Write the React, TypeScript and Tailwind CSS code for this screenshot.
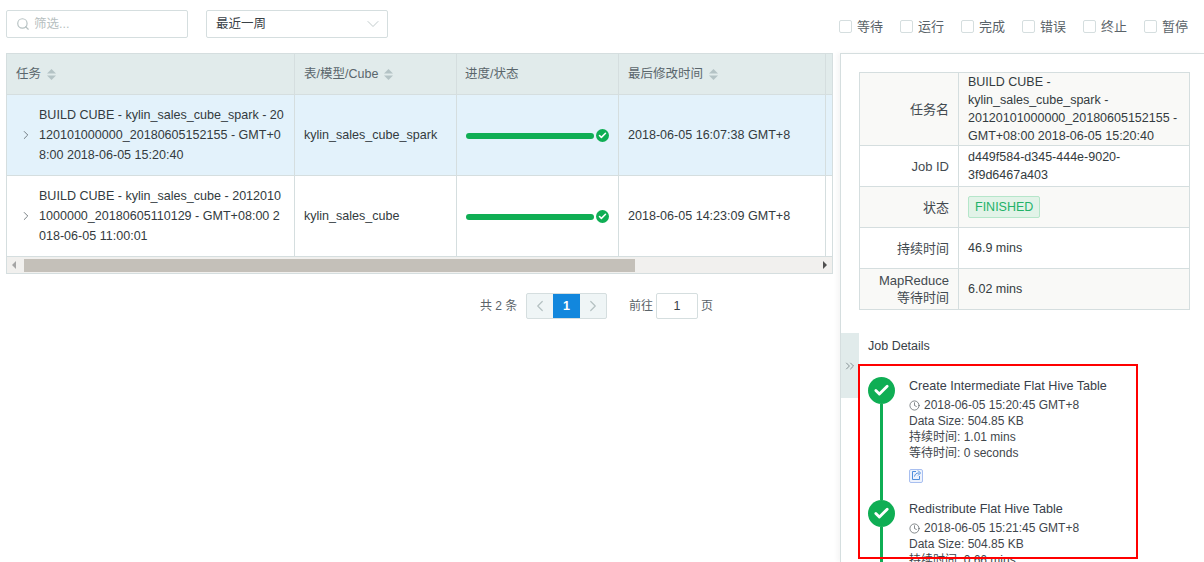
import { Check, ChevronDown, ChevronLeft, ChevronRight, ChevronsRight, Clock, Search } from "lucide-react";

const font = "font-['Liberation_Sans','Noto_Sans_CJK_SC',sans-serif]";

const statuses = ["等待", "运行", "完成", "错误", "终止", "暂停"];

const jobs = [
  {
    lines: ["BUILD CUBE - kylin_sales_cube_spark - 20", "120101000000_20180605152155 - GMT+0", "8:00 2018-06-05 15:20:40"],
    cube: "kylin_sales_cube_spark",
    time: "2018-06-05 16:07:38 GMT+8",
    active: true,
  },
  {
    lines: ["BUILD CUBE - kylin_sales_cube - 2012010", "1000000_20180605110129 - GMT+08:00 2", "018-06-05 11:00:01"],
    cube: "kylin_sales_cube",
    time: "2018-06-05 14:23:09 GMT+8",
    active: false,
  },
];

function SortIcon() {
  return (
    <svg width="9" height="11" viewBox="0 0 9 11" className="ml-[6px] fill-[#b4c3c5]">
      <path d="M4.5 0 9 4.5H0Z" />
      <path d="M4.5 11 0 6.5h9Z" />
    </svg>
  );
}

function DoneBar() {
  return (
    <div className="flex items-center">
      <div className="mt-[1px] h-[6px] w-[128px] rounded-full bg-[#0fae54]" />
      <div className="ml-[2px] flex h-[13px] w-[13px] items-center justify-center rounded-full bg-[#0fae54]">
        <Check size={9} strokeWidth={4} className="text-white" />
      </div>
    </div>
  );
}

function InfoRow({ label, shaded, h, children }: { label: React.ReactNode; shaded?: boolean; h: string; children: React.ReactNode }) {
  return (
    <div className={`flex border-b border-[#d5dedf] ${h} ${shaded ? "bg-[#f9f9f7]" : "bg-white"}`}>
      <div className="flex w-[99px] shrink-0 items-center justify-end border-r border-[#d5dedf] pr-[9px] text-right text-[13px] leading-[17px] text-[#434a50]">
        {label}
      </div>
      <div className="flex flex-1 items-center pl-[9px] text-[12.5px] leading-[18px] text-[#333b40]">{children}</div>
    </div>
  );
}

function Step({ title, time, wait, duration, link }: { title: string; time: string; wait: string; duration: string; link?: boolean }) {
  return (
    <div className="flex">
      <div className="flex w-[27px] shrink-0 flex-col items-center">
        <div className="flex h-[27px] w-[27px] shrink-0 items-center justify-center rounded-full bg-[#0fae54]">
          <Check size={17} strokeWidth={4} className="text-white" />
        </div>
        <div className="w-[3px] flex-1 bg-[#0fae54]" />
      </div>
      <div className={`ml-[14px] pt-[1px] text-[12px] leading-[16px] text-[#3f464c] ${link ? "pb-[17px]" : "pb-[8px]"}`}>
        <div className="text-[12.6px] leading-[16px] text-[#38404a]">{title}</div>
        <div className="mt-[3px] flex items-center">
          <Clock size={11} strokeWidth={1.5} className="mr-[4px] text-[#4f565b]" />
          {time}
        </div>
        <div>Data Size: 504.85 KB</div>
        <div>持续时间: {duration}</div>
        <div>等待时间: {wait}</div>
        {link && (
          <svg width="14" height="15" viewBox="0 0 14 15" fill="none" className="mt-[7px]">
            <rect x="0.5" y="1.5" width="13" height="13" rx="1.5" fill="#eef3fd" stroke="#a8bff0" />
            <path d="M7 3.5H3.5v8h7V8" stroke="#4f8fdc" strokeWidth="1" />
            <path d="M5.5 8.5C6 6 7.5 5 10 5" stroke="#4f8fdc" strokeWidth="1" />
            <path d="M9 2.5 11.5 5 9 7.5" stroke="#4f8fdc" strokeWidth="1" />
          </svg>
        )}
      </div>
    </div>
  );
}

export default function App() {
  return (
    <div className={`${font} flex h-[562px] w-[1204px] flex-col overflow-hidden bg-white`}>
      <div className="flex h-[53px] shrink-0 items-start pl-[6px] pt-[10px]">
        <div className="flex h-[28px] w-[182px] items-center rounded-[2px] border border-[#d5dedf] pl-[9px] text-[12.5px] text-[#b7bfc1]">
          <Search size={14} className="mr-[4px] text-[#b7c2c3]" />
          筛选...
        </div>
        <div className="ml-[18px] flex h-[28px] w-[182px] items-center justify-between rounded-[2px] border border-[#d5dedf] pl-[9px] pr-[4px] text-[12.5px] text-[#3a4147]">
          最近一周
          <ChevronDown size={20} strokeWidth={1} className="text-[#b4c0c2]" />
        </div>
        <div className="ml-auto mr-[8px] mt-[9px] flex gap-[9px]">
          {statuses.map((s) => (
            <label key={s} className="flex w-[52px] items-center text-[13px] leading-[15px] text-[#5a6369]">
              <span className="mr-[5px] h-[13px] w-[13px] rounded-[2px] border border-[#d5dedf]" />
              {s}
            </label>
          ))}
        </div>
      </div>

      <div className="flex min-h-0 flex-1">
        <div className="w-[840px] shrink-0 pl-[6px]">
          <div className="h-[221px] w-[827px] border border-[#d5dedf] text-[12px]">
            <div className="flex h-[41px] border-b border-[#d5dedf] bg-[#e1ebeb] text-[12.5px] text-[#5a666c]">
              <div className="flex w-[288px] items-center border-r border-[#d5dedf] pl-[9px]">任务<SortIcon /></div>
              <div className="flex w-[162px] items-center border-r border-[#d5dedf] pl-[9px]">表/模型/Cube<SortIcon /></div>
              <div className="flex w-[162px] items-center border-r border-[#d5dedf] pl-[8px]">进度/状态</div>
              <div className="flex w-[207px] items-center border-r border-[#d5dedf] pl-[9px]">最后修改时间<SortIcon /></div>
            </div>
            {jobs.map((job) => (
              <div key={job.cube} className={`flex h-[81px] border-b border-[#d5dedf] ${job.active ? "bg-[#e3f2fb]" : "bg-white"}`}>
                <div className="flex w-[288px] items-center border-r border-[#d5dedf]">
                  <ChevronRight size={14} strokeWidth={1.3} className="ml-[12px] mr-[6px] shrink-0 text-[#4f595e]" />
                  <div className="whitespace-nowrap text-[12.55px] leading-[20px] text-[#333b40]">
                    {job.lines.map((line) => (
                      <div key={line}>{line}</div>
                    ))}
                  </div>
                </div>
                <div className="flex w-[162px] items-center border-r border-[#d5dedf] pl-[9px] text-[12.55px] text-[#333b40]">{job.cube}</div>
                <div className="flex w-[162px] items-center border-r border-[#d5dedf] pl-[9px]"><DoneBar /></div>
                <div className="flex w-[207px] items-center border-r border-[#d5dedf] pl-[9px] text-[12.55px] text-[#333b40]">{job.time}</div>
              </div>
            ))}
            <div className="flex h-[16px] items-center bg-[#f1f0ee]">
              <div className="w-[17px] pl-[5px]">
                <div className="h-0 w-0 border-y-[4px] border-r-[4px] border-y-transparent border-r-[#a5a5a5]" />
              </div>
              <div className="h-[13px] w-[611px] bg-[#c4c0b9]" />
              <div className="ml-auto pr-[5px]">
                <div className="h-0 w-0 border-y-[4px] border-l-[4px] border-y-transparent border-l-[#505050]" />
              </div>
            </div>
          </div>

          <div className="mt-[19px] flex items-center text-[12px] text-[#5a6369]">
            <span className="ml-[474px] w-[38px] whitespace-nowrap">共 2 条</span>
            <div className="ml-[8px] flex h-[26px] w-[81px] overflow-hidden rounded-[2px] border border-[#d5dedf] bg-[#eff5f6]">
              <div className="flex w-[26px] items-center justify-center">
                <ChevronLeft size={18} strokeWidth={1.6} className="text-[#b4c0c2]" />
              </div>
              <div className="flex w-[27px] items-center justify-center bg-[#1287dd] text-[12.5px] font-bold text-white">1</div>
              <div className="flex w-[26px] items-center justify-center">
                <ChevronRight size={18} strokeWidth={1.6} className="text-[#b4c0c2]" />
              </div>
            </div>
            <span className="ml-[22px]">前往</span>
            <div className="ml-[3px] flex h-[26px] w-[42px] items-center justify-center rounded-[2px] border border-[#d5dedf] text-[12.5px] text-[#3a4147]">1</div>
            <span className="ml-[3px]">页</span>
          </div>
        </div>

        <div className="relative flex-1 border-l border-t border-[#d5dedf] pl-[18px] shadow-[-3px_0_4px_rgba(0,0,0,0.04)]">
          <div className="mt-[18px] w-[331px] border-x border-t border-[#d5dedf]">
            <InfoRow label="任务名" shaded h="h-[73px]">
              <div>
                BUILD CUBE -<br />
                kylin_sales_cube_spark -<br />
                20120101000000_20180605152155 -<br />
                GMT+08:00 2018-06-05 15:20:40
              </div>
            </InfoRow>
            <InfoRow label="Job ID" h="h-[41px]">
              <div>
                d449f584-d345-444e-9020-<br />
                3f9d6467a403
              </div>
            </InfoRow>
            <InfoRow label="状态" shaded h="h-[41px]">
              <span className="rounded-[2px] border border-[#b5e6ca] bg-[#e2f3e8] px-[6px] py-[2px] text-[12.5px] leading-[16px] text-[#22b268]">FINISHED</span>
            </InfoRow>
            <InfoRow label="持续时间" h="h-[41px]">46.9 mins</InfoRow>
            <InfoRow label={<span>MapReduce<br />等待时间</span>} shaded h="h-[41px]">6.02 mins</InfoRow>
          </div>

          <div className="flex">
            <div className="ml-[-18px] mt-[23px] flex h-[65px] w-[18px] shrink-0 items-center justify-center bg-[#e1ebeb]">
              <ChevronsRight size={14} strokeWidth={1.2} className="text-[#5f6c70]" />
            </div>
            <div className="ml-[9px] mt-[28px] text-[12.5px] leading-[16px] text-[#3a4147]">Job Details</div>
          </div>

          <div className="ml-[9px] mt-[-21px]">
            <Step title="Create Intermediate Flat Hive Table" time="2018-06-05 15:20:45 GMT+8" duration="1.01 mins" wait="0 seconds" link />
            <Step title="Redistribute Flat Hive Table" time="2018-06-05 15:21:45 GMT+8" duration="0.66 mins" wait="0 seconds" />
          </div>

          <div className="pointer-events-none absolute left-[17px] top-[310px] h-[195px] w-[280px] border-[2px] border-[#ff0000]" />
        </div>
      </div>
    </div>
  );
}
